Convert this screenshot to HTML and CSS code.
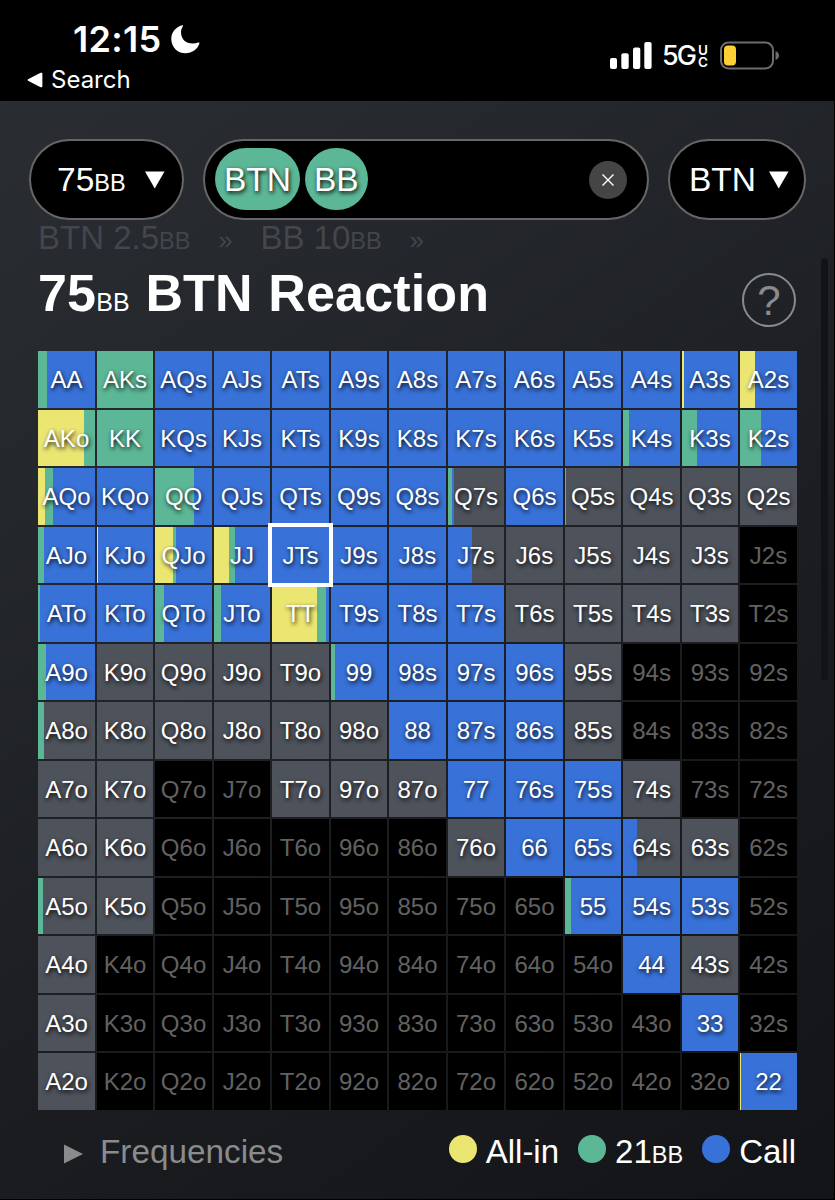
FILE: index.html
```html
<!DOCTYPE html>
<html lang="en">
<head>
    <meta charset="UTF-8">
    <meta name="viewport" content="width=device-width, initial-scale=1.0">
    <title>75BB BTN Reaction</title>
    <link rel="stylesheet" href="styles.css">
</head>
<body>
    <header class="status">
        <div class="status-left">
            <div class="clock">
                <span class="time">12:15</span>
                <svg class="moon" width="29" height="29" viewBox="0 0 29 29"><path d="M11.3 0.3 C4.5 2 0.3 7.6 0.3 14 C0.3 22 6.5 28.3 14.5 28.3 C21.2 28.3 26.6 24.2 28.4 18.6 C28.6 17.7 28 17.3 27.2 17.6 C25.6 18.3 23.7 18.6 21.8 18.6 C14.5 18.6 10 14.1 10 7.1 C10 5.2 10.5 3 11.9 1.2 C12.3 0.5 12 0.1 11.3 0.3 Z" fill="#fff"/></svg>
            </div>
            <div class="back">
                <svg width="16" height="16" viewBox="0 0 16 16"><path d="M1 7.2 L13.6 0.8 Q15.4 0.2 15.4 1.8 V14.2 Q15.4 15.8 13.6 15.2 L1 8.8 Q0 8 1 7.2 Z" fill="#fff"/></svg>
                <span>Search</span>
            </div>
        </div>
        <div class="status-right">
            <svg width="42" height="27" viewBox="0 0 42 27" fill="#fff">
                <rect x="0" y="16" width="7" height="11" rx="2"/>
                <rect x="11.3" y="11.3" width="7.4" height="15.7" rx="2"/>
                <rect x="23" y="5.5" width="7.3" height="21.5" rx="2"/>
                <rect x="34.3" y="0" width="7.3" height="27" rx="2"/>
            </svg>
            <span class="network">5G</span>
            <span class="uc"><span>U</span><span>C</span></span>
            <svg class="battery" width="60" height="29" viewBox="0 0 60 29">
                <rect x="1" y="1.5" width="52" height="26" rx="7.5" fill="none" stroke="#6d6d6d" stroke-width="2"/>
                <rect x="4" y="4.5" width="12" height="20" rx="4" fill="#fdd035"/>
                <path d="M55.5 10 Q59 11.5 59 14.5 Q59 17.5 55.5 19 Z" fill="#6d6d6d"/>
            </svg>
        </div>
    </header>

    <main class="app">
        <div class="filters">
            <div class="pill stack">
                <span>75<small>BB</small></span>
                <svg width="20" height="18" viewBox="0 0 20 18"><path d="M0 0.5 H19.5 L9.75 17.5 Z" fill="#fff"/></svg>
            </div>
            <div class="pill players">
                <span class="tag">BTN</span>
                <span class="tag">BB</span>
                <span class="clear">
                    <svg width="12" height="12" viewBox="0 0 12 12"><path d="M0.5 0.5 L11.5 11.5 M11.5 0.5 L0.5 11.5" stroke="#fff" stroke-width="1.4"/></svg>
                </span>
            </div>
            <div class="pill hero">
                <span>BTN</span>
                <svg width="20" height="18" viewBox="0 0 20 18"><path d="M0 0.5 H19.5 L9.75 17.5 Z" fill="#fff"/></svg>
            </div>
        </div>

        <div class="history">
            <span>BTN 2.5<small>BB</small></span>
            <span class="sep">»</span>
            <span>BB 10<small>BB</small></span>
            <span class="sep">»</span>
        </div>

        <div class="heading">
            <h1>75<small>BB</small> BTN Reaction</h1>
            <span class="help">?</span>
        </div>

        <div class="grid" id="grid"></div>

        <footer class="legend">
            <div class="freq">
                <svg width="19" height="20" viewBox="0 0 19 20"><path d="M0 0.5 L19 10 L0 19.5 Z" fill="#8a8b8d"/></svg>
                <span>Frequencies</span>
            </div>
            <div class="actions">
                <span class="dot allin"></span><span>All-in</span>
                <span class="dot raise"></span><span>21<small>BB</small></span>
                <span class="dot call"></span><span>Call</span>
            </div>
        </footer>
        <div class="scrollbar"></div>
    </main>
    <script src="script.js"></script>
</body>
</html>
```
FILE: styles.css
```css
* {
    box-sizing: border-box;
}
body {
    margin: 0;
    width: 835px;
    height: 1200px;
    overflow: hidden;
    background: #000;
    color: #fff;
    font-family: "Liberation Sans", Arial, sans-serif;
}
small {
    font-size: 23.5px;
    font-weight: normal;
}
svg {
    display: block;
    flex: none;
}

/* status bar */
.status {
    height: 101px;
    display: flex;
    justify-content: space-between;
    font-family: Inter, "Liberation Sans", sans-serif;
}
.status-left {
    padding: 20px 0 0 27px;
}
.clock {
    display: flex;
    align-items: center;
    height: 38px;
    padding-left: 46px;
}
.time {
    width: 98px;
    font-size: 36px;
    font-weight: 600;
    letter-spacing: 0.3px;
}
.back {
    display: flex;
    align-items: center;
    gap: 8px;
    height: 43px;
    font-size: 24px;
}
.status-right {
    display: flex;
    align-items: center;
    height: 29px;
    margin: 41px 55px 0 0;
}
.network {
    width: 36px;
    margin-left: 10px;
    font-size: 27px;
    font-weight: 500;
    letter-spacing: -2px;
}
.uc {
    display: flex;
    flex-direction: column;
    width: 11px;
    margin-right: 11px;
    font-size: 13.5px;
    font-weight: 600;
    line-height: 12px;
}

/* page */
.app {
    position: relative;
    width: 834px;
    height: 1098px;
    padding: 38px 28px 0 29px;
    background: linear-gradient(145deg, #2a2d32 0%, #24272c 25%, #1b1d21 60%, #121418 100%);
}
.filters {
    display: flex;
    justify-content: space-between;
    height: 81px;
}
.pill {
    display: flex;
    align-items: center;
    height: 81px;
    border: 2px solid #666;
    border-radius: 41px;
    background: #000;
    font-size: 33.5px;
}
.stack {
    width: 155px;
    padding-left: 26px;
    gap: 19px;
}
.players {
    width: 446px;
    padding: 0 20px 0 10px;
    gap: 5px;
}
.hero {
    width: 138px;
    padding-left: 19px;
    gap: 13px;
}
.tag {
    height: 62px;
    margin-top: -1px;
    padding: 0 9px;
    border-radius: 31px;
    background: #5cb796;
    line-height: 63px;
    text-shadow: 1px 2px 4px #000;
}
.clear {
    display: flex;
    align-items: center;
    justify-content: center;
    width: 38px;
    height: 38px;
    margin-left: auto;
    border-radius: 50%;
    background: #454545;
}
.history {
    display: flex;
    align-items: baseline;
    height: 38px;
    padding-left: 9px;
    font-size: 33px;
    line-height: 35px;
    color: #43464a;
}
.sep {
    width: 70px;
    text-align: center;
    font-size: 26px;
    line-height: 30px;
}
.heading {
    display: flex;
    justify-content: space-between;
    height: 93px;
    padding: 4px 10px 0 9px;
}
h1 {
    margin: 0;
    font-size: 52px;
    line-height: 62px;
    word-spacing: 1px;
    letter-spacing: 0.15px;
}
h1 small {
    font-size: 25px;
}
.help {
    width: 54px;
    height: 54px;
    margin-top: 11px;
    border: 2px solid #8a8b8d;
    border-radius: 50%;
    color: #8a8b8d;
    font-size: 42px;
    line-height: 51px;
    text-align: center;
}

/* hand chart */
.grid {
    display: grid;
    grid-template-columns: repeat(13, 56.5px);
    grid-auto-rows: 56.5px;
    gap: 2px;
    margin-left: 9.3px;
}
.cell {
    font-size: 24px;
    line-height: 58px;
    text-align: center;
    white-space: nowrap;
    text-shadow: 1px 2px 4px rgba(0, 0, 0, 0.9);
}
.out {
    background: #000;
    color: #626262;
    text-shadow: none;
}
.selected {
    position: relative;
    outline: 4px solid #fff;
}

/* legend */
.legend {
    display: flex;
    justify-content: space-between;
    align-items: center;
    height: 84px;
    padding: 0 10px 0 35px;
    font-size: 33.3px;
}
.freq {
    display: flex;
    align-items: center;
    gap: 17px;
    color: #8a8b8d;
}
.freq svg {
    margin-top: 4px;
}
.actions {
    display: flex;
    align-items: center;
    font-size: 33px;
}
.dot {
    width: 28px;
    height: 28px;
    margin: -5px 9px 0 19px;
    border-radius: 50%;
}
.allin {
    background: #ebe571;
}
.raise {
    background: #5cb796;
}
.call {
    background: #3871d7;
}
.scrollbar {
    position: absolute;
    top: 157px;
    right: 6px;
    width: 7px;
    height: 422px;
    border-radius: 4px;
    background: #121316;
}
```
FILE: script.js
```js
const ranks = 'AKQJT98765432';
const colors = {
    y: '#ebe571', // all-in
    g: '#5cb796', // raise
    c: '#3871d7', // call
    f: '#4d525b'  // fold
};

// one letter per hand, x = not in range
const rows = [
    'cgccccccccccc',
    'ggccccccccccc',
    'cccccccfcffff',
    'cccccccfffffx',
    'ccccccccffffx',
    'cffffccccfxxx',
    'ffffffcccfxxx',
    'ffxxfffcccfxx',
    'ffxxxxxfccffx',
    'ffxxxxxxxcccx',
    'fxxxxxxxxxcfx',
    'fxxxxxxxxxxcx',
    'fxxxxxxxxxxxc'
];

// mixed hands: [color, end in %], the row color fills the rest
const mixed = {
    AA: [['g', 15]], A3s: [['y', 3]], A2s: [['y', 27]],
    AKo: [['y', 80]], K4s: [['g', 10]], K3s: [['g', 26]], K2s: [['g', 37]],
    AQo: [['y', 13], ['g', 27]], QQ: [['g', 68]], Q7s: [['g', 8], ['c', 11]], Q5s: [['g', 2]],
    AJo: [['g', 11]], KJo: [['y', 1.5]], QJo: [['y', 32], ['g', 36]], JJ: [['y', 27], ['g', 38]], J7s: [['c', 43]],
    ATo: [['g', 4]], QTo: [['g', 15]], JTo: [['g', 13]], TT: [['y', 79], ['g', 95]],
    A9o: [['g', 14]], 99: [['g', 8]],
    A8o: [['g', 11]],
    '64s': [['c', 25]],
    A5o: [['g', 9]], 55: [['g', 11]],
    22: [['y', 1.5]]
};

function handName(r, c) {
    if (r === c) return ranks[r] + ranks[c];
    return r < c ? ranks[r] + ranks[c] + 's' : ranks[c] + ranks[r] + 'o';
}

const grid = document.querySelector('#grid');
rows.forEach((row, r) => {
    [...row].forEach((type, c) => {
        const cell = document.createElement('div');
        const name = handName(r, c);
        cell.className = 'cell';
        cell.textContent = name;
        if (type === 'x') {
            cell.classList.add('out');
        } else {
            let start = 0;
            const stops = (mixed[name] || []).concat([[type, 100]]).map(([key, end]) => {
                const stop = `${colors[key]} ${start}% ${end}%`;
                start = end;
                return stop;
            });
            cell.style.background = `linear-gradient(to right, ${stops.join(', ')})`;
        }
        if (name === 'JTs') cell.classList.add('selected');
        grid.appendChild(cell);
    });
});
```
